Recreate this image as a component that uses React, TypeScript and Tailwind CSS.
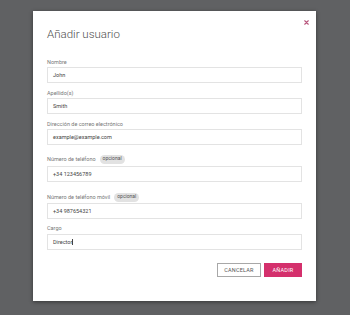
export default function App () {
  return (
    <div className="w-[350px] h-[315px] bg-[#606163] pt-[11px] pl-[33px] overflow-hidden" style={{ fontFamily: 'Roboto, "Liberation Sans", sans-serif' }}>
      <div className="relative w-[283px] h-[290px] bg-white shadow-[0_1px_4px_rgba(0,0,0,0.45)] pt-[16px] px-[14px]">
        <button className="absolute top-[8px] right-[7px] w-[6px] h-[6px] flex items-center justify-center">
          <svg width="5" height="5" viewBox="0 0 10 10" stroke="#b8567c" strokeWidth="2.2" strokeLinecap="round">
            <path d="M1.5 1.5 8.5 8.5 M8.5 1.5 1.5 8.5" />
          </svg>
        </button>

        <h2 className="text-[11.5px] leading-[14px] font-light text-[#505050]">Añadir usuario</h2>

        <div className="mt-[18px] w-[255px]">
          <label className="block text-[5.5px] leading-[7px] text-[#777]">Nombre</label>
          <div className="mt-[1px] h-[16px] border border-[#e3e3e3] px-[5px] flex items-center text-[5.5px] text-[#444]">John</div>

          <label className="mt-[7px] block text-[5.5px] leading-[7px] text-[#777]">Apellido(s)</label>
          <div className="mt-[1px] h-[16px] border border-[#e3e3e3] px-[5px] flex items-center text-[5.5px] text-[#444]">Smith</div>

          <label className="mt-[7px] block text-[5.5px] leading-[7px] text-[#777]">Dirección de correo electrónico</label>
          <div className="mt-[1px] h-[16px] border border-[#e3e3e3] px-[5px] flex items-center text-[5.5px] text-[#444]">example@example.com</div>

          <div className="mt-[9px] h-[10px] flex items-center gap-[4px]">
            <span className="text-[5.5px] text-[#777]">Número de teléfono</span>
            <span className="h-[9px] px-[3px] rounded-full bg-[#e2e2e2] flex items-center text-[5px] text-[#555]">opcional</span>
          </div>
          <div className="mt-[2px] h-[16px] border border-[#e3e3e3] px-[5px] flex items-center text-[5.5px] text-[#444]">+34 123456789</div>

          <div className="mt-[10px] h-[10px] flex items-center gap-[4px]">
            <span className="text-[5.5px] text-[#777]">Número de teléfono móvil</span>
            <span className="h-[9px] px-[3px] rounded-full bg-[#e2e2e2] flex items-center text-[5px] text-[#555]">opcional</span>
          </div>
          <div className="mt-[1px] h-[16px] border border-[#e3e3e3] px-[5px] flex items-center text-[5.5px] text-[#444]">+34 987654321</div>

          <label className="mt-[6px] block text-[5.5px] leading-[7px] text-[#777]">Cargo</label>
          <div className="mt-[2px] h-[16px] border border-[#e3e3e3] px-[5px] flex items-center text-[5.5px] text-[#444]">
            Director<span className="w-px h-[6px] bg-[#444]" />
          </div>

          <div className="mt-[13px] flex justify-end gap-[3px]">
            <button className="w-[44px] h-[14px] border border-[#a8a8a8] bg-white text-[5.5px] text-[#555] tracking-[0.2px]">CANCELAR</button>
            <button className="w-[38px] h-[14px] bg-[#d4306c] text-[5.5px] text-white tracking-[0.2px]">AÑADIR</button>
          </div>
        </div>
      </div>
    </div>
  )
}
